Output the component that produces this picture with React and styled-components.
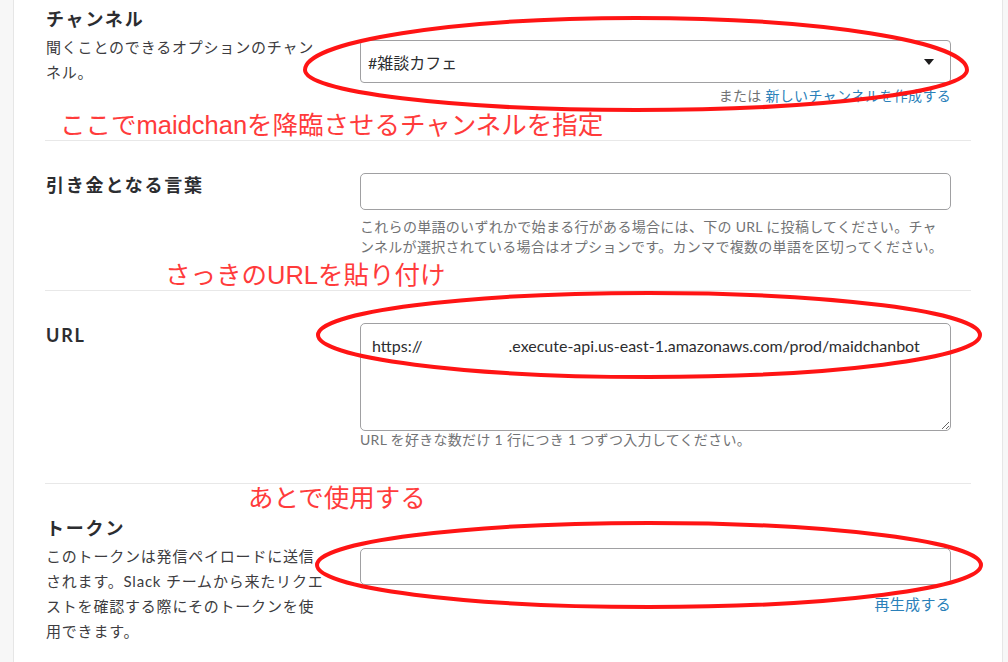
import React from 'react';
import styled, { createGlobalStyle } from 'styled-components';

const GlobalStyle = createGlobalStyle`
  html, body {
    margin: 0;
    padding: 0;
    background: #ffffff;
  }
  body {
    font-family: Lato, "Noto Sans CJK JP", sans-serif;
    color: #2c2d30;
  }
`;

const StyledPage = styled.div`
  position: relative;
  display: flex;
  width: 1008px;
  height: 662px;
  overflow: hidden;
  background: #ffffff;
`;

const StyledRail = styled.div`
  flex: 0 0 ${({ width }) => width}px;
  background: #f7f7f7;
  border-${({ side }) => side}: 1px solid #e6e6e6;
`;

const StyledMain = styled.div`
  flex: 1;
  padding: 0 31px 0 31px;
`;

const StyledSection = styled.section`
  display: grid;
  grid-template-columns: 280px 591px;
  column-gap: 35px;
  padding: ${({ first }) => (first ? '7px' : '32px')} 0 ${({ bottom }) => bottom || 34}px 0;
  border-bottom: ${({ last }) => (last ? 'none' : '1px solid #e8e8e8')};
`;

const StyledLabel = styled.div`
  display: flex;
  flex-direction: column;
  padding-left: 1px;
  > h3 {
    margin: 0;
    font-size: 18px;
    line-height: 24px;
    font-weight: 700;
    color: #2c2d30;
    letter-spacing: 1.8px;
  }
  > p {
    margin: 4px 0 0 0;
    font-size: 15px;
    line-height: 25px;
    letter-spacing: 0.8px;
    color: #3d3c40;
  }
`;

const StyledField = styled.div`
  display: flex;
  flex-direction: column;
  margin-top: ${({ offset }) => offset || 0}px;
`;

const StyledSelect = styled.div`
  display: flex;
  align-items: center;
  justify-content: space-between;
  height: 41px;
  padding: 0 16px 0 7px;
  border: 1px solid #a0a0a2;
  border-radius: 4px;
  font-size: 16px;
  color: #2c2d30;
  > svg {
    width: 10px;
    height: 6px;
  }
`;

const StyledInput = styled.input`
  box-sizing: border-box;
  width: 100%;
  height: 37px;
  margin: 0;
  border: 1px solid #a0a0a2;
  border-radius: 5px;
  background: #ffffff;
  font: inherit;
  outline: none;
`;

const StyledTextArea = styled.textarea`
  box-sizing: border-box;
  display: block;
  width: 100%;
  height: 108px;
  margin: 0;
  padding: 11px 11px;
  border: 1px solid #a0a0a2;
  border-radius: 5px;
  font-family: Lato, "Noto Sans CJK JP", sans-serif;
  font-size: 16px;
  line-height: 22px;
  color: #2c2d30;
  white-space: pre;
  overflow: hidden;
  outline: none;
`;

const StyledHint = styled.div`
  margin-top: ${({ gap }) => gap}px;
  font-size: ${({ size }) => size || 14}px;
  line-height: ${({ lh }) => lh || 20}px;
  letter-spacing: 0.3px;
  color: #717274;
  text-align: ${({ right }) => (right ? 'right' : 'left')};
  > a {
    color: #2a80b9;
    text-decoration: none;
  }
`;

const StyledNote = styled.div`
  position: absolute;
  left: ${({ x }) => x}px;
  top: ${({ y }) => y}px;
  font-family: "Liberation Sans", "Noto Sans CJK JP", sans-serif;
  font-size: 25.5px;
  line-height: 30px;
  color: #ff3b3b;
  white-space: nowrap;
`;

const StyledMarks = styled.svg`
  position: absolute;
  left: 0;
  top: 0;
  pointer-events: none;
`;

const Caret = () => (
  <svg viewBox="0 0 10 6">
    <path d="M0 0 L10 0 L5 6 Z" fill="#1d1c1d" />
  </svg>
);

function App() {
  return (
    <StyledPage>
      <GlobalStyle />
      <StyledRail width={13} side="right" />
      <StyledMain>
        <StyledSection first>
          <StyledLabel>
            <h3>チャンネル</h3>
            <p>聞くことのできるオプションのチャンネル。</p>
          </StyledLabel>
          <StyledField offset={33}>
            <StyledSelect>
              <span>#雑談カフェ</span>
              <Caret />
            </StyledSelect>
            <StyledHint right gap={3}>
              または <a href="#">新しいチャンネルを作成する</a>
            </StyledHint>
          </StyledField>
        </StyledSection>

        <StyledSection bottom={33}>
          <StyledLabel>
            <h3>引き金となる言葉</h3>
          </StyledLabel>
          <StyledField>
            <StyledInput />
            <StyledHint gap={7} lh={20}>
              これらの単語のいずれかで始まる行がある場合には、下の URL に投稿してください。チャ
              <br />
              ンネルが選択されている場合はオプションです。カンマで複数の単語を区切ってください。
            </StyledHint>
          </StyledField>
        </StyledSection>

        <StyledSection>
          <StyledLabel>
            <h3>URL</h3>
          </StyledLabel>
          <StyledField>
            <StyledTextArea
              readOnly
              defaultValue={
                'https://                     .execute-api.us-east-1.amazonaws.com/prod/maidchanbot'
              }
            />
            <StyledHint gap={0} lh={18}>
              URL を好きな数だけ 1 行につき 1 つずつ入力してください。
            </StyledHint>
          </StyledField>
        </StyledSection>

        <StyledSection last>
          <StyledLabel>
            <h3>トークン</h3>
            <p>
              このトークンは発信ペイロードに送信されます。Slack
              チームから来たリクエストを確認する際にそのトークンを使用できます。
            </p>
          </StyledLabel>
          <StyledField offset={32}>
            <StyledInput />
            <StyledHint right gap={9} size={15}>
              <a href="#">再生成する</a>
            </StyledHint>
          </StyledField>
        </StyledSection>
      </StyledMain>
      <StyledRail width={5} side="left" />

      <StyledNote x={60} y={110}>
        ここでmaidchanを降臨させるチャンネルを指定
      </StyledNote>
      <StyledNote x={165} y={260}>
        さっきのURLを貼り付け
      </StyledNote>
      <StyledNote x={248} y={483}>
        あとで使用する
      </StyledNote>

      <StyledMarks width="1008" height="662" viewBox="0 0 1008 662">
        <g fill="none" stroke="#ff1414" strokeWidth="4">
          <path d="M305 70 A331 52 0 0 1 967 70 A331 40 0 0 1 305 70 Z" />
          <ellipse cx="649" cy="335" rx="331" ry="42" />
          <ellipse cx="649" cy="565" rx="332" ry="42" />
        </g>
      </StyledMarks>
    </StyledPage>
  );
}

export default App;
